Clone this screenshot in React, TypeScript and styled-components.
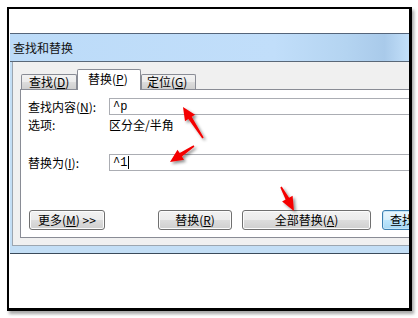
import styled, { createGlobalStyle } from 'styled-components';

const GlobalStyle = createGlobalStyle`
  html, body {
    margin: 0;
    padding: 0;
    background: #fff;
  }
  body {
    font-family: "Noto Sans CJK SC", "Liberation Sans", sans-serif;
    font-size: 12px;
    color: #000;
  }
`;

const Page = styled.div`
  position: relative;
  width: 418px;
  height: 318px;
  padding: 7px 0 0 7px;
  box-sizing: border-box;
  overflow: hidden;
`;

/* black picture frame around the cropped dialog */
const Frame = styled.div`
  width: 405px;
  height: 304px;
  box-sizing: border-box;
  border-style: solid;
  border-color: #000;
  border-width: 2px 3px 3px 2px;
  box-shadow: 2px 3px 3px rgba(0, 0, 0, 0.35);
  background: #fff;
  overflow: hidden;
  padding: 24px 0 0 1px;
`;

const Dialog = styled.div`
  width: 480px;
  background: #c3def5;
  border-top: 1px solid #55657a;
  border-bottom: 1px solid #3b4a5a;
`;

const TitleBar = styled.div`
  height: 27px;
  display: flex;
  align-items: center;
  padding-left: 3px;
  background: linear-gradient(
    to right,
    #bcdbf8 0%,
    #c1defa 55%,
    #b4d4f1 70%,
    #a9caea 78%,
    #c2dff9 83%,
    #bddcf8 100%
  );
  border-bottom: 1px solid #5a6878;
  font-size: 12px;
  line-height: 1;
  color: #111;
`;

const BodyWrap = styled.div`
  padding: 0 0 7px 2px;
`;

const Body = styled.div`
  height: 184px;
  box-sizing: border-box;
  background: #f0f0f0;
  border-left: 1px solid #9ca6b0;
  border-bottom: 1px solid #9ca6b0;
  padding: 7px 0 0 7px;
`;

const TabStrip = styled.div`
  display: flex;
  align-items: flex-end;
  height: 20px;
  padding-left: 1px;
  position: relative;
  z-index: 1;
`;

const Tab = styled.div<{ $active?: boolean; $w: number; $pad: number }>`
  box-sizing: border-box;
  width: ${(p) => p.$w}px;
  height: ${(p) => (p.$active ? 21 : 15)}px;
  margin-bottom: ${(p) => (p.$active ? -1 : 0)}px;
  border: 1px solid #898c95;
  border-bottom: none;
  border-radius: 2px 2px 0 0;
  background: ${(p) =>
    p.$active
      ? '#fff'
      : 'linear-gradient(#f2f2f2 0%, #ebebeb 50%, #dddddd 50%, #cfcfcf 100%)'};
  display: flex;
  align-items: center;
  padding-left: ${(p) => p.$pad}px;
  padding-bottom: ${(p) => (p.$active ? 2 : 0)}px;
  font-size: 12px;
  line-height: 1;
  white-space: nowrap;
`;

const Panel = styled.div`
  height: 149px;
  box-sizing: border-box;
  border: 1px solid #898c95;
  background: #fff;
  padding: 8px 0 0 7px;
`;

const FieldRow = styled.div<{ $top: number; $h: number }>`
  display: grid;
  grid-template-columns: 81px 1fr;
  align-items: center;
  height: ${(p) => p.$h}px;
  margin-top: ${(p) => p.$top}px;
  font-size: 12px;
  line-height: 1;
  white-space: nowrap;
`;

const Label = styled.span``;

const TextBox = styled.div`
  height: 17px;
  box-sizing: border-box;
  border: 1px solid #abadb3;
  border-right: none;
  background: #fff;
  display: flex;
  align-items: center;
  padding-left: 3px;
  font-family: "Liberation Mono", "Noto Sans CJK SC", monospace;
  font-size: 12px;
`;

const Caret = styled.span`
  display: inline-block;
  width: 1px;
  height: 13px;
  background: #000;
  margin-left: 1px;
`;

const ButtonRow = styled.div`
  display: flex;
  margin-top: 39px;
  padding-left: 1px;
`;

const Button = styled.div<{ $w: number; $gap: number; $primary?: boolean }>`
  flex: none;
  width: ${(p) => p.$w}px;
  height: 20px;
  margin-right: ${(p) => p.$gap}px;
  box-sizing: border-box;
  border: 1px solid ${(p) => (p.$primary ? '#3c7fb1' : '#707070')};
  border-radius: 3px;
  background: ${(p) =>
    p.$primary
      ? 'linear-gradient(#eaf6fd 0%, #d9f0fc 50%, #bee6fd 50%, #a7d9f5 100%)'
      : 'linear-gradient(#f2f2f2 0%, #ebebeb 50%, #dddddd 50%, #cfcfcf 100%)'};
  box-shadow: ${(p) => (p.$primary ? 'inset 0 0 0 1px #c6e6f8' : 'inset 0 0 0 1px #fcfcfc')};
  display: flex;
  align-items: center;
  justify-content: ${(p) => (p.$primary ? 'flex-start' : 'center')};
  padding-left: ${(p) => (p.$primary ? 7 : 0)}px;
  overflow: hidden;
  font-size: 12px;
  line-height: 1;
  white-space: nowrap;
`;

const Overlay = styled.svg`
  position: absolute;
  left: 0;
  top: 0;
  pointer-events: none;
`;

type Pt = [number, number];

function arrowPoints(tail: Pt, tip: Pt, head: number, half: number, shaft: number) {
  const dx = tip[0] - tail[0];
  const dy = tip[1] - tail[1];
  const len = Math.hypot(dx, dy);
  const ux = dx / len;
  const uy = dy / len;
  const nx = -uy;
  const ny = ux;
  const bx = tip[0] - ux * head;
  const by = tip[1] - uy * head;
  const pts: Pt[] = [
    [tail[0] + nx * shaft * 0.4, tail[1] + ny * shaft * 0.4],
    [bx + nx * shaft, by + ny * shaft],
    [bx + nx * half, by + ny * half],
    tip,
    [bx - nx * half, by - ny * half],
    [bx - nx * shaft, by - ny * shaft],
    [tail[0] - nx * shaft * 0.4, tail[1] - ny * shaft * 0.4],
  ];
  return pts.map((p) => `${p[0].toFixed(1)},${p[1].toFixed(1)}`).join(' ');
}

const arrows = [
  { tail: [203, 138] as Pt, tip: [183, 107] as Pt, head: 13, half: 6 },
  { tail: [194, 146] as Pt, tip: [170, 162] as Pt, head: 13, half: 6 },
  { tail: [281, 187] as Pt, tip: [294, 211] as Pt, head: 14, half: 6 },
];

export default function App() {
  return (
    <>
      <GlobalStyle />
      <Page>
        <Frame>
          <Dialog>
            <TitleBar>查找和替换</TitleBar>
            <BodyWrap>
              <Body>
                <TabStrip>
                  <Tab $w={56} $pad={7}>
                    查找(<u>D</u>)
                  </Tab>
                  <Tab $w={64} $pad={10} $active>
                    替换(<u>P</u>)
                  </Tab>
                  <Tab $w={55} $pad={5}>
                    定位(<u>G</u>)
                  </Tab>
                </TabStrip>
                <Panel>
                  <FieldRow $top={0} $h={17}>
                    <Label>
                      查找内容(<u>N</u>):
                    </Label>
                    <TextBox>^p</TextBox>
                  </FieldRow>
                  <FieldRow $top={2} $h={16}>
                    <Label>选项:</Label>
                    <Label>区分全/半角</Label>
                  </FieldRow>
                  <FieldRow $top={21} $h={17}>
                    <Label>
                      替换为(<u>I</u>):
                    </Label>
                    <TextBox>
                      ^1
                      <Caret />
                    </TextBox>
                  </FieldRow>
                  <ButtonRow>
                    <Button $w={76} $gap={53}>
                      更多(<u>M</u>) &gt;&gt;
                    </Button>
                    <Button $w={74} $gap={10}>
                      替换(<u>R</u>)
                    </Button>
                    <Button $w={129} $gap={11}>
                      全部替换(<u>A</u>)
                    </Button>
                    <Button $w={95} $gap={0} $primary>
                      查找下一处(<u>F</u>)
                    </Button>
                  </ButtonRow>
                </Panel>
              </Body>
            </BodyWrap>
          </Dialog>
        </Frame>
        <Overlay width={418} height={318} viewBox="0 0 418 318">
          <defs>
            <filter id="arrowShadow" x="-50%" y="-50%" width="200%" height="200%">
              <feDropShadow dx="2" dy="2" stdDeviation="1.5" floodColor="#000" floodOpacity="0.45" />
            </filter>
          </defs>
          {arrows.map((a, i) => (
            <polygon
              key={i}
              points={arrowPoints(a.tail, a.tip, a.head, a.half, 2)}
              fill="#f40000"
              filter="url(#arrowShadow)"
            />
          ))}
        </Overlay>
      </Page>
    </>
  );
}
